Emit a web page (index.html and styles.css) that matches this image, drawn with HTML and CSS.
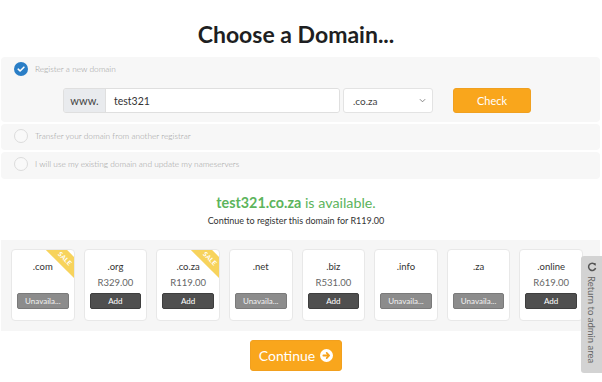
FILE: index.html
```html
<!DOCTYPE html>
<html>
<head>
<meta charset="utf-8">
<link rel="stylesheet" href="styles.css">
</head>
<body>
<div class="page">
  <h1 class="title">Choose a Domain...</h1>

  <div class="option">
    <div class="opt-row">
      <span class="radio checked"><svg viewBox="0 0 14 14" width="14" height="14"><circle cx="7" cy="7" r="7" fill="#2a7ec6"/><path d="M4.2 7.2 L6.1 9 L9.9 5.2" fill="none" stroke="#fff" stroke-width="1.6" stroke-linecap="round" stroke-linejoin="round"/></svg></span>
      <span class="opt-label">Register a new domain</span>
    </div>
    <div class="search-row">
      <div class="input-group">
        <span class="addon">www.</span>
        <span class="field">test321</span>
      </div>
      <div class="select">
        <span>.co.za</span>
        <svg class="chev" viewBox="0 0 8 5" width="7" height="5"><path d="M1 1 L4 4 L7 1" fill="none" stroke="#777" stroke-width="1"/></svg>
      </div>
      <button class="btn-check">Check</button>
    </div>
  </div>

  <div class="option">
    <div class="opt-row">
      <span class="radio"></span>
      <span class="opt-label">Transfer your domain from another registrar</span>
    </div>
  </div>

  <div class="option option-last">
    <div class="opt-row">
      <span class="radio"></span>
      <span class="opt-label">I will use my existing domain and update my nameservers</span>
    </div>
  </div>

  <div class="result">
    <p class="avail"><strong>test321.co.za</strong> is available.</p>
    <p class="sub">Continue to register this domain for R119.00</p>
  </div>

  <div class="suggestions">
    <div class="card">
      <div class="ribbon">SALE</div>
      <div class="tld">.com</div>
      <div class="price"></div>
      <button class="btn-small unavail">Unavaila...</button>
    </div>
    <div class="card">
      <div class="tld">.org</div>
      <div class="price">R329.00</div>
      <button class="btn-small add">Add</button>
    </div>
    <div class="card">
      <div class="ribbon">SALE</div>
      <div class="tld">.co.za</div>
      <div class="price">R119.00</div>
      <button class="btn-small add">Add</button>
    </div>
    <div class="card">
      <div class="tld">.net</div>
      <div class="price"></div>
      <button class="btn-small unavail">Unavaila...</button>
    </div>
    <div class="card">
      <div class="tld">.biz</div>
      <div class="price">R531.00</div>
      <button class="btn-small add">Add</button>
    </div>
    <div class="card">
      <div class="tld">.info</div>
      <div class="price"></div>
      <button class="btn-small unavail">Unavaila...</button>
    </div>
    <div class="card">
      <div class="tld">.za</div>
      <div class="price"></div>
      <button class="btn-small unavail">Unavaila...</button>
    </div>
    <div class="card">
      <div class="tld">.online</div>
      <div class="price">R619.00</div>
      <button class="btn-small add">Add</button>
    </div>
  </div>

  <div class="actions">
    <button class="btn-continue">Continue <svg viewBox="0 0 14 14" width="13" height="13"><circle cx="7" cy="7" r="7" fill="#fff"/><path d="M3.6 7 H9.8 M7.2 4.3 L9.9 7 L7.2 9.7" fill="none" stroke="#f7a21b" stroke-width="1.9" stroke-linecap="round" stroke-linejoin="round"/></svg></button>
  </div>
</div>

<div class="admin-tab">
  <svg viewBox="0 0 12 12" width="10" height="10"><path d="M9.6 3.2 A4.3 4.3 0 1 0 10.3 7.2" fill="none" stroke="#555" stroke-width="1.8"/><path d="M7 1.2 L10.6 1.4 L10.2 4.9 Z" fill="#555"/></svg>
  <span>Return to admin area</span>
</div>
</body>
</html>
```
FILE: styles.css
```css
* { box-sizing: border-box; }
html, body { margin: 0; padding: 0; background: #fff; }
body {
  font-family: Lato, "Open Sans", "Liberation Sans", sans-serif;
  color: #333;
  width: 602px;
  height: 382px;
  overflow: hidden;
  position: relative;
}
.page { padding: 0 2px 0 1px; }

.title {
  margin: 19px 0 8px;
  padding-right: 9px;
  font-size: 23px;
  line-height: 30px;
  font-weight: 700;
  color: #1e1f22;
  text-align: center;
}

.option {
  background: #f7f7f7;
  border-radius: 4px;
  padding: 5px 13px 7px;
  margin-bottom: 2px;
}
.option:first-of-type { padding-bottom: 9px; }
.option-last { padding-bottom: 8px; }

.opt-row { display: flex; align-items: center; height: 14px; }
.radio {
  width: 14px; height: 14px;
  border-radius: 50%;
  border: 1px solid #dcdcdc;
  background: #f9f9f9;
  flex: none;
}
.radio.checked { border: none; background: none; display: block; }
.radio svg { display: block; }
.opt-label {
  margin-left: 7px;
  font-size: 8.3px;
  font-weight: 300;
  color: #9a9a9a;
}

.search-row {
  display: flex;
  margin-top: 12px;
  padding-left: 49px;
  height: 25px;
}
.input-group {
  display: flex;
  width: 277px;
  border: 1px solid #dfdfdf;
  border-radius: 3px;
  overflow: hidden;
}
.addon {
  width: 42px;
  background: #e9ebee;
  border-right: 1px solid #dfdfdf;
  display: flex; align-items: center; justify-content: center;
  font-size: 11px;
  color: #444;
}
.field {
  flex: 1;
  background: #fff;
  display: flex; align-items: center;
  padding-left: 8px;
  font-size: 10.5px;
  color: #333;
}
.select {
  width: 90px;
  margin-left: 3px;
  background: #fff;
  border: 1px solid #e3e3e3;
  border-radius: 3px;
  display: flex; align-items: center; justify-content: space-between;
  padding: 0 6px 0 9px;
  font-size: 10px;
  color: #444;
}
.chev { display: block; }
.btn-check {
  width: 78px;
  margin-left: 20px;
  background: #f9a61c;
  border: 1px solid #f0a020;
  border-radius: 3px;
  color: #fff;
  font-family: inherit;
  font-size: 11px;
  padding: 0;
}

.result { text-align: center; margin-top: 14px; padding-right: 9px; }
.avail {
  margin: 0;
  font-size: 14.3px;
  line-height: 20px;
  color: #5cb45c;
}
.avail strong { font-weight: 700; }
.sub {
  margin: 1px 0 0;
  font-size: 9px;
  line-height: 14px;
  color: #333;
}

.suggestions {
  margin-top: 12px;
  background: #f6f6f6;
  padding: 9px 17px 10px 10px;
  display: grid;
  grid-template-columns: repeat(8, 1fr);
  gap: 9px;
}
.card {
  position: relative;
  overflow: hidden;
  height: 72px;
  background: #fff;
  border: 1px solid #e8e8e8;
  border-radius: 4px;
  padding: 10px 5px 0;
  text-align: center;
}
.tld {
  font-size: 9.5px;
  line-height: 14px;
  color: #333;
}
.price {
  margin-top: 2px;
  height: 14px;
  font-size: 9.5px;
  line-height: 14px;
  color: #666;
}
.btn-small {
  display: block;
  width: 100%;
  height: 16px;
  margin-top: 3px;
  border-radius: 2px;
  font-family: inherit;
  font-size: 8px;
  padding: 0;
  color: #fff;
}
.btn-small.add { background: #4f4f4f; border: 1px solid #3e3e3e; }
.btn-small.unavail { background: #8c8c8c; border: 1px solid #7a7a7a; color: #f2f2f2; }

.ribbon {
  position: absolute;
  top: 1px;
  right: -19px;
  width: 56px;
  height: 15px;
  background: #f7d35c;
  transform: rotate(45deg);
  color: #fff;
  font-size: 6.5px;
  font-weight: 700;
  line-height: 15px;
  letter-spacing: 0.3px;
  text-align: center;
}

.actions { display: flex; justify-content: center; margin-top: 9px; padding-right: 9px; }
.btn-continue {
  width: 92px;
  height: 31px;
  background: #f9a61c;
  border: 1px solid #f2a01e;
  border-radius: 3px;
  color: #fff;
  font-family: inherit;
  font-size: 14px;
  display: flex; align-items: center; justify-content: center; gap: 5px;
  padding: 0;
}
.btn-continue svg { display: block; }

.admin-tab {
  position: absolute;
  top: 256px;
  right: 0;
  width: 21px;
  height: 117px;
  background: #d3d3d3;
  border-radius: 3px 0 0 3px;
  display: flex;
  flex-direction: column;
  align-items: center;
  padding-top: 6px;
  gap: 4px;
}
.admin-tab svg { display: block; }
.admin-tab span {
  writing-mode: vertical-rl;
  font-size: 9.5px;
  color: #666;
  white-space: nowrap;
}
```
